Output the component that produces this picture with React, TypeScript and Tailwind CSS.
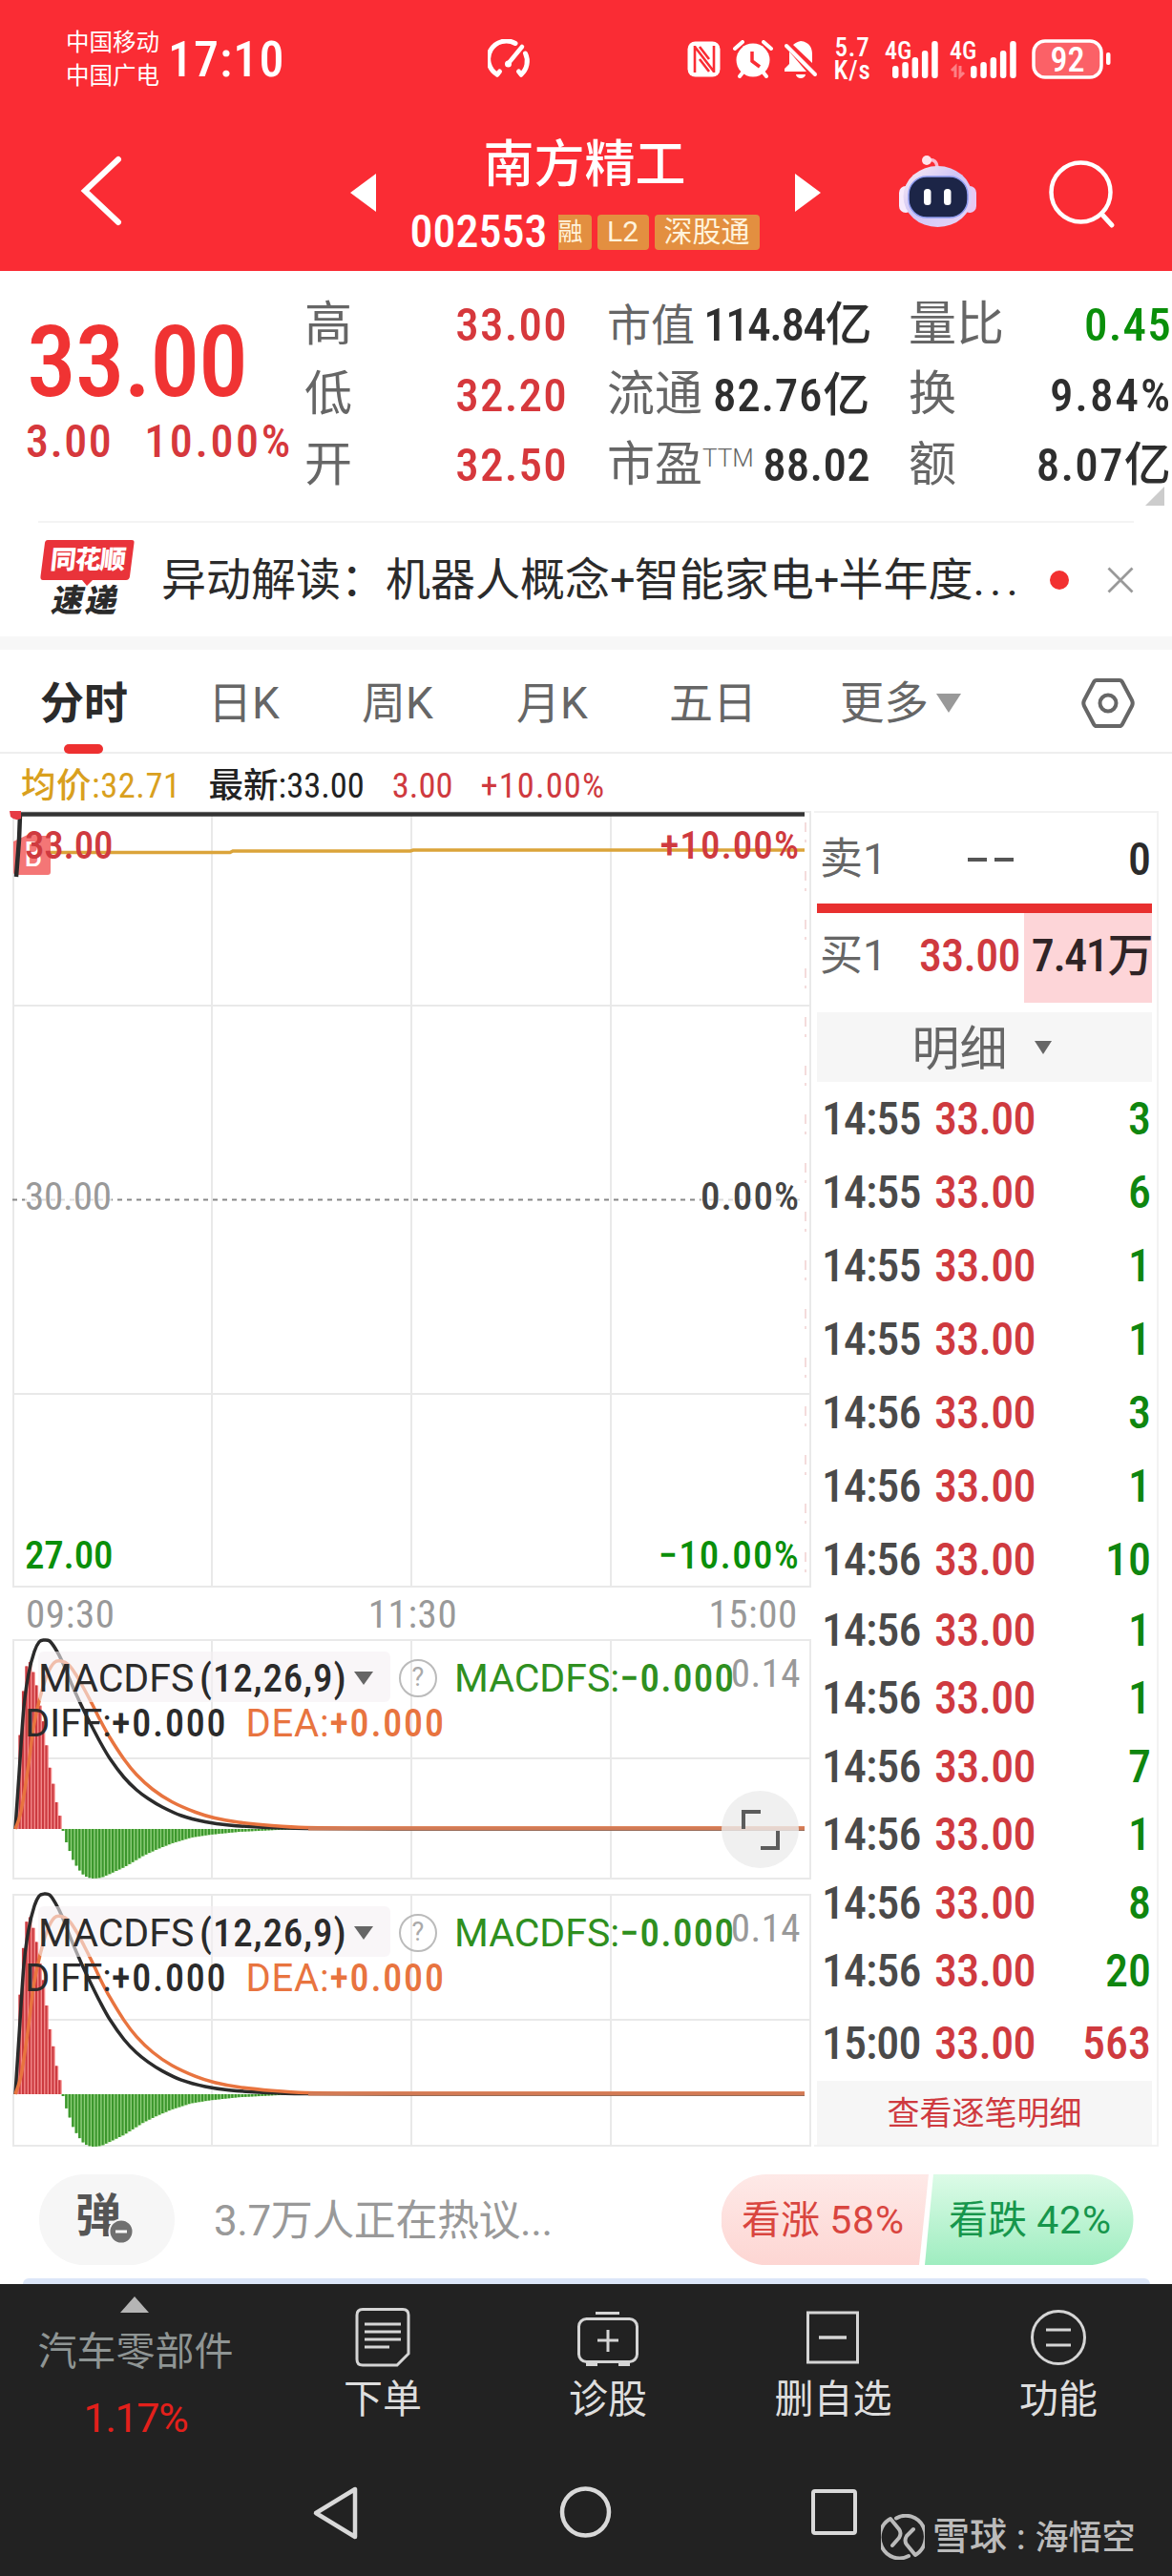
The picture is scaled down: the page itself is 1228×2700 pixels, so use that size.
import type { ReactNode } from 'react'

type TickType = { time: string; price: string; volume: string; row: string }

const NUM = "font-['Roboto_Condensed','Noto_Sans_CJK_SC',sans-serif]"

const TALL = 'h-[77px]'
const SHORT = 'h-[71.5px]'

const TICKS: TickType[] = [
  { time: '14:55', price: '33.00', volume: '3', row: TALL },
  { time: '14:55', price: '33.00', volume: '6', row: TALL },
  { time: '14:55', price: '33.00', volume: '1', row: TALL },
  { time: '14:55', price: '33.00', volume: '1', row: TALL },
  { time: '14:56', price: '33.00', volume: '3', row: TALL },
  { time: '14:56', price: '33.00', volume: '1', row: TALL },
  { time: '14:56', price: '33.00', volume: '10', row: TALL },
  { time: '14:56', price: '33.00', volume: '1', row: SHORT },
  { time: '14:56', price: '33.00', volume: '1', row: SHORT },
  { time: '14:56', price: '33.00', volume: '7', row: SHORT },
  { time: '14:56', price: '33.00', volume: '1', row: SHORT },
  { time: '14:56', price: '33.00', volume: '8', row: SHORT },
  { time: '14:56', price: '33.00', volume: '20', row: SHORT },
  { time: '15:00', price: '33.00', volume: '563', row: 'h-[79px]' },
]

type PointType = [number, number]

// x in pixels from the left of the panel, y as height above the zero line
const DIFF: PointType[] = [
  [3, 0], [7, 58], [12, 128], [17, 163], [23, 186], [28, 196], [33, 198],
  [39, 197], [45, 189], [52, 176], [62, 152], [72, 130], [82, 110], [92, 91],
  [102, 74], [117, 54], [130, 41], [142, 32], [157, 23], [177, 14], [202, 7.5],
  [227, 4], [267, 1.5], [307, 0.5], [400, 0], [830, 0],
]
const DEA: PointType[] = [
  [3, 0], [9, 18], [17, 68], [22, 106], [29, 138], [37, 163], [44, 174.5],
  [51, 176], [59, 172], [67, 161], [75, 147], [84, 130], [92, 114], [102, 96],
  [117, 73], [130, 57], [147, 41.5], [167, 28.5], [192, 17.5], [212, 11.5],
  [237, 7], [272, 3.5], [307, 1.5], [400, 1], [830, 1],
]
const HIST: PointType[] = [
  [4, 20], [7, 92], [11, 145], [14, 170], [18, 175], [21, 166], [25, 150],
  [28, 131], [32, 112], [35, 90], [38, 68], [42, 49], [45, 31], [49, 15],
  [52, 1], [55, -11], [59, -21], [62, -30], [65, -36], [69, -42], [72, -46],
  [75, -49], [79, -51], [85, -52], [93, -51], [102, -47], [117, -40],
  [137, -28], [152, -21], [167, -15], [187, -9], [207, -6], [237, -3],
  [277, -1], [320, 0],
]

const histAt = (x: number) => {
  const i = HIST.findIndex(([px]) => px >= x)
  if (i <= 0) return i === 0 ? HIST[0][1] : 0
  const [x0, y0] = HIST[i - 1]
  const [x1, y1] = HIST[i]
  return y0 + ((y1 - y0) * (x - x0)) / (x1 - x0)
}

const BARS = Array.from({ length: 88 }, (_, i) => 4 + i * 3.48)

const smoothPath = (points: PointType[], zero: number, scale: number) => {
  const p = points.map(([x, y]) => [x, zero - y * scale])
  let d = `M${p[0][0]},${p[0][1]}`
  for (let i = 0; i < p.length - 1; i++) {
    const a = p[Math.max(i - 1, 0)]
    const b = p[i]
    const c = p[i + 1]
    const e = p[Math.min(i + 2, p.length - 1)]
    // limit the handles so uneven spacing doesn't overshoot
    const k = (c[0] - b[0]) / 3
    const s1 = (c[1] - a[1]) / (c[0] - a[0] || 1)
    const s2 = (e[1] - b[1]) / (e[0] - b[0] || 1)
    d += `C${b[0] + k},${b[1] + s1 * k} ${c[0] - k},${c[1] - s2 * k} ${c[0]},${c[1]}`
  }
  return d
}

const StatusBar = () => (
  <div className="flex h-[124px] items-center text-white">
    <div className="ml-[69px] flex w-[102px] flex-col text-[24.5px] leading-[35px]">
      <span>中国移动</span>
      <span>中国广电</span>
    </div>
    <span className={`ml-[5px] w-[127px] pt-0.5 text-[52px] font-medium leading-none tracking-[0.02em] ${NUM}`}>17:10</span>
    <svg className="ml-[208px]" width="45" height="42" viewBox="0 0 45 42" fill="none" stroke="white" strokeWidth="5" strokeLinecap="round">
      <path d="M10 37 A18.5 18.5 0 0 1 29 4.5" />
      <path d="M39.5 15 A18.5 18.5 0 0 1 35 37" />
      <path d="M10 37 L12.500 34" />
      <path d="M35 37 L32.500 34" />
      <path d="M36 8 L22 25" strokeWidth="4.500" />
      <circle cx="21.500" cy="26" r="3.500" fill="white" stroke="none" />
    </svg>
    <svg className="ml-[164px]" width="36" height="40" viewBox="0 0 36 40">
      <rect x="0.500" y="1.500" width="34" height="37" rx="8" fill="white" />
      <path d="M8 6 V34 M28 6 V34 M8 7 L28 33 M13 20 L23 33 M13 7 L23 20" stroke="#fa2c34" strokeWidth="2.600" fill="none" />
    </svg>
    <svg className="ml-3" width="42" height="40" viewBox="0 0 42 40">
      <circle cx="21" cy="21" r="17.500" fill="white" />
      <path d="M2 9 L10 2 M40 9 L32 2 M7 38 L11 33 M35 38 L31 33" stroke="white" strokeWidth="4" strokeLinecap="round" />
      <path d="M20 12 V22 L28 28" stroke="#fa2c34" strokeWidth="3.500" fill="none" />
    </svg>
    <svg className="ml-2.5" width="38" height="40" viewBox="0 0 38 40">
      <path d="M19 1 C28 2 31 8 31 15 V24 L11 5 C13 3 15 2 19 1Z" fill="white" />
      <path d="M7 12 L25 33 H2 V30 L7 25Z" fill="white" />
      <path d="M4 6 L34 36" stroke="white" strokeWidth="4" strokeLinecap="round" />
      <path d="M14 36 H24 A5 4 0 0 1 14 36Z" fill="white" />
    </svg>
    <div className={`ml-[14px] flex w-[42px] flex-col items-center text-[27px] font-medium leading-[24px] tracking-[0.03em] ${NUM}`}>
      <span>5.7</span>
      <span>K/s</span>
    </div>
    <Signal />
    <Signal arrows />
    <svg className="ml-3.5" width="84" height="44" viewBox="0 0 84 44">
      <rect x="2" y="3" width="71" height="38" rx="12" fill="white" fillOpacity="0.25" stroke="white" strokeWidth="3.500" />
      <rect x="78" y="15" width="4.500" height="13" rx="2" fill="white" />
      <text x="37.500" y="34.500" textAnchor="middle" fontSize="36" fontWeight="500" fill="white" className={NUM}>92</text>
    </svg>
  </div>
)

const Signal = ({ arrows = false }: { arrows?: boolean }) => (
  <svg className={arrows ? 'ml-2.5 overflow-visible' : 'ml-[13px] overflow-visible'} width={arrows ? 72 : 58} height="44" viewBox={arrows ? '0 0 72 44' : '0 0 58 44'}>
    <text x="0" y="22" fontSize="26" fontWeight="500" fill="white" className={NUM}>4G</text>
    {arrows && <path d="M6 41 V30 L2 34 M11 29 V40 L15 36" stroke="white" strokeOpacity="0.4" strokeWidth="3" fill="none" />}
    <g fill="white" transform={arrows ? 'translate(22 1)' : 'translate(8 1)'}>
      <rect x="0" y="28" width="6.500" height="13" rx="3" />
      <rect x="10.300" y="24" width="6.500" height="17" rx="3" />
      <rect x="20.600" y="19" width="6.500" height="22" rx="3" />
      <rect x="30.900" y="12" width="6.500" height="29" rx="3" />
      <rect x="41.200" y="2" width="6.500" height="39" rx="3" />
    </g>
  </svg>
)

const TitleBar = () => (
  <div className="flex h-40 text-white">
    <svg className="ml-[84px] mt-[38px]" width="46" height="76" viewBox="0 0 46 76" fill="none" stroke="white" strokeWidth="6" strokeLinecap="round">
      <path d="M40 5 L5 38 L40 71" strokeLinejoin="miter" />
    </svg>
    <svg className="ml-[237px] mt-[58px]" width="27" height="40" viewBox="0 0 27 40">
      <path d="M27 0 V40 L0 20Z" fill="white" />
    </svg>
    <div className="ml-[34px] mt-[19px] flex w-[369px] flex-col items-center">
      <span className="text-[53px] font-medium leading-[60px]">南方精工</span>
      <div className="mt-[21px] flex h-[38px] items-center text-[28px] leading-none text-[#fff3dc]">
        <span className={`mr-[12px] w-[143px] text-[48px] font-medium text-white ${NUM}`}>002553</span>
        <span className="flex h-[37px] w-[35px] items-center justify-start overflow-hidden rounded-r-sm bg-[#e38f40] text-[26px]">融</span>
        <span className="ml-1.5 flex h-[37px] w-[54px] items-center justify-center rounded-sm bg-[#e38f40] text-[30px]">L2</span>
        <span className="ml-1.5 flex h-[37px] w-[110px] items-center justify-center rounded-sm bg-[#e38f40] text-[30px]">深股通</span>
      </div>
    </div>
    <svg className="ml-9 mt-[58px]" width="27" height="40" viewBox="0 0 27 40">
      <path d="M0 0 V40 L27 20Z" fill="white" />
    </svg>
    <svg className="ml-[81px] mt-[37px]" width="83" height="78" viewBox="0 0 83 78">
      <defs>
        <linearGradient id="shell" x1="0" y1="0" x2="1" y2="1">
          <stop offset="0" stopColor="#ffeef2" />
          <stop offset="0.450" stopColor="#cfc6f6" />
          <stop offset="1" stopColor="#e9d6f8" />
        </linearGradient>
      </defs>
      <path d="M30 7 C38 5 41 9 41 16" stroke="#fbb9cf" strokeWidth="3.500" fill="none" />
      <circle cx="30" cy="7" r="5" fill="#ffe3ec" />
      <rect x="1" y="34" width="14" height="28" rx="7" fill="#f6eafc" />
      <rect x="68" y="34" width="14" height="28" rx="7" fill="#e6c9f3" />
      <ellipse cx="41.500" cy="45" rx="36" ry="32" fill="url(#shell)" />
      <rect x="11" y="24" width="62" height="43" rx="19" fill="#1c2547" stroke="#8f9cf0" strokeWidth="1.500" />
      <rect x="27" y="37" width="7.500" height="17" rx="3.500" fill="white" />
      <rect x="48" y="37" width="7.500" height="17" rx="3.500" fill="white" />
    </svg>
    <svg className="ml-[74px] mt-[43px]" width="72" height="74" viewBox="0 0 72 74" fill="none" stroke="white" strokeWidth="4.500" strokeLinecap="round">
      <circle cx="34.500" cy="34.500" r="31" />
      <path d="M56 57 L67 69" strokeWidth="5" />
    </svg>
  </div>
)

const QuoteRow = ({
  label,
  children,
  color = 'text-[#2e2e2e]',
  tracking = 'tracking-[0.025em]',
}: {
  label: ReactNode
  children: ReactNode
  color?: string
  tracking?: string
}) => (
  <div className="flex h-[73.500px] items-center justify-between whitespace-nowrap text-[49px] leading-none">
    <span className="text-[50px] text-[#666]">{label}</span>
    <span className={`pt-0.5 font-medium ${NUM} ${tracking} ${color}`}>{children}</span>
  </div>
)

const Quote = () => (
  <div className="relative ml-[25px] flex h-[262px] pt-[19px]">
    <div className={`w-[294px] text-[#f03333] ${NUM}`}>
      <div className="ml-[3px] mt-[19px] text-[104px] font-medium leading-[116px] tracking-[-0.012em]">33.00</div>
      <div className="-mt-[3px] ml-[2px] flex gap-[33px] whitespace-nowrap text-[48px] font-medium leading-[56px] text-[#d6383c]">
        <span className="tracking-[0.03em]">3.00</span>
        <span className="tracking-[0.055em]">10.00%</span>
      </div>
    </div>
    <div className="w-[276px]">
      <QuoteRow label="高" color="text-[#d6383c]">33.00</QuoteRow>
      <QuoteRow label="低" color="text-[#d6383c]">32.20</QuoteRow>
      <QuoteRow label="开" color="text-[#d6383c]">32.50</QuoteRow>
    </div>
    <div className="ml-[41px] w-[276px]">
      <QuoteRow label={<span className="text-[46px]">市值</span>} tracking="tracking-[-0.03em]">114.84亿</QuoteRow>
      <QuoteRow label="流通" tracking="tracking-[0.015em]">82.76亿</QuoteRow>
      <QuoteRow label={<>市盈<sup className="relative -top-[15px] align-baseline text-[26px] font-light">TTM</sup></>} tracking="tracking-[0.005em]">88.02</QuoteRow>
    </div>
    <div className="ml-[40px] w-[276px]">
      <QuoteRow label="量比" color="text-[#0a8f0a]">0.45</QuoteRow>
      <QuoteRow label="换" tracking="tracking-[0.04em]">9.84%</QuoteRow>
      <QuoteRow label="额">8.07亿</QuoteRow>
    </div>
    <svg className="absolute bottom-4 right-2" width="20" height="20" viewBox="0 0 20 20">
      <path d="M20 0 V20 H0Z" fill="#ccc" />
    </svg>
  </div>
)

const News = () => (
  <div className="mx-10 flex h-[122px] items-center border-t-2 border-[#f3f3f3]">
    <div className="relative flex h-[84px] w-[102px] flex-col items-center">
      <svg className="absolute left-0.5 top-0" width="100" height="50" viewBox="0 0 100 50">
        <path d="M8 0 H96 Q99 0 98.500 3 L94 38 Q93.500 42 90 42 H55 L49 48 L44 42 H3 Q0 42 0.500 38 L5 3 Q5.500 0 8 0Z" fill="#e9333a" />
      </svg>
      <span className="relative ml-0.5 mt-2 -skew-x-6 text-[27px] font-black leading-[27px] tracking-[-0.04em] text-white">同花顺</span>
      <span className="mt-3 -skew-x-12 text-[33px] font-black leading-[34px] tracking-[0.08em] text-[#2b2b2b]">速递</span>
    </div>
    <span className="ml-[27px] w-[897px] whitespace-nowrap text-[47px] leading-none text-[#2b2b2b]">
      异动解读：机器人概念<span className="tracking-[-0.02em]">+</span>智能家电<span className="tracking-[-0.02em]">+</span>半年度<span className="tracking-[0.11em]">...</span>
    </span>
    <span className="ml-[34px] size-5 rounded-full bg-[#f23030]" />
    <svg className="ml-10" width="28" height="28" viewBox="0 0 28 28" stroke="#999" strokeWidth="2.800">
      <path d="M1.500 1.500 L26.500 26.500 M26.500 1.500 L1.500 26.500" />
    </svg>
  </div>
)

const Tabs = () => (
  <div className="flex h-[109px] items-center border-b-2 border-[#eee] pt-1 text-[46px] leading-none text-[#666]">
    <div className="relative ml-[42px] w-[93px] whitespace-nowrap font-bold text-[#2b2b2b]">
      分时
      <span className="absolute -bottom-[30px] left-[25px] h-2.5 w-[41px] rounded-full bg-[#ee3030]" />
    </div>
    <span className="ml-[83px] w-[78px]">日K</span>
    <span className="ml-[83px] w-[78px]">周K</span>
    <span className="ml-[84px] w-[78px]">月K</span>
    <span className="ml-[82px] w-[92px]">五日</span>
    <span className="ml-[87px] w-[94px] text-[46.500px]">更多</span>
    <svg className="ml-[7px]" width="26" height="20" viewBox="0 0 26 20">
      <path d="M0 0 H26 L13 20Z" fill="#999" />
    </svg>
    <svg className="ml-[125px]" width="58" height="54" viewBox="0 0 58 54" fill="none" stroke="#666" strokeWidth="4">
      <path d="M17 3 H41 Q43 3 44 5 L54 24 Q55.500 27 54 30 L44 49 Q43 51 41 51 H17 Q15 51 14 49 L4 30 Q2.500 27 4 24 L14 5 Q15 3 17 3Z" />
      <circle cx="29" cy="27" r="8.500" />
    </svg>
  </div>
)

const Grid = ({ height, rows }: { height: number; rows: number[] }) => (
  <g stroke="#e9e9e9" strokeWidth="2" fill="none">
    <rect x="1" y="1" width="835" height={height - 2} />
    <path d={`M209 0 V${height} M418 0 V${height} M627 0 V${height}`} />
    {rows.map((y) => (
      <path key={y} d={`M0 ${y} H836`} />
    ))}
  </g>
)

const PriceChart = () => (
  <div className="relative h-[814px]">
    <svg className="absolute left-0 top-0 overflow-visible" width="837" height="814" viewBox="0 0 837 814">
      <Grid height={814} rows={[204, 611]} />
      <path d="M0 407.500 H830" stroke="#888" strokeWidth="2" strokeDasharray="5 5" />
      <path d="M831 12 V800" stroke="#e9b9b9" strokeWidth="1" strokeDasharray="10 8 3 30" />
      <path d="M37 43.500 H228 L231 42 H417 L420 41 H830" stroke="#dba43a" strokeWidth="3.500" fill="none" />
      <path d="M1 32 L18 24 L27 26 H36 Q40 26 40 30 V64 Q40 67 37 67 H4 Q1 67 1 64Z" fill="#f04848" fillOpacity="0.750" />
      <text x="12" y="58" fontSize="36" fill="white" className={NUM}>B</text>
      <path d="M8 4 L7 30 L4 69" stroke="#2b2b2b" strokeWidth="4.500" fill="none" />
      <path d="M7 3.500 H830" stroke="#333" strokeWidth="4.500" />
      <path d="M-3 0 H9 V8 Q3 11 -2 6Z" fill="#e63a44" />
    </svg>
    <div className={`relative flex h-full flex-col justify-between pb-[14px] pl-[13px] pr-[15px] pt-[16px] text-[41px] font-medium leading-[40px] tracking-[-0.005em] ${NUM}`}>
      <div className="flex justify-between text-[#cf3a3f]">
        <span>33.00</span>
        <span className="tracking-[0.025em]">+10.00%</span>
      </div>
      <div className="flex justify-between pb-[8px]">
        <span className="bg-white/70 font-[450] text-[#999]">30.00</span>
        <span className="bg-white/70 tracking-[0.025em] text-[#444]">0.00%</span>
      </div>
      <div className="flex justify-between text-[#0a8f0a]">
        <span>27.00</span>
        <span className="tracking-[0.03em]">−10.00%</span>
      </div>
    </div>
  </div>
)

const MacdPanel = ({ height, mid, zero, scale, expand = false }: { height: number; mid: number; zero: number; scale: number; expand?: boolean }) => (
  <div className="relative" style={{ height }}>
    <svg className="absolute left-0 top-0 overflow-visible" width="837" height={height} viewBox={`0 0 837 ${height}`}>
      <Grid height={height} rows={[mid]} />
      {BARS.map((x) => {
        const v = histAt(x) * scale
        return (
          <g key={x}>
            <rect x={x - 1} y={v > 0 ? zero - v : zero} width="3.480" height={Math.abs(v)} fill={v > 0 ? '#f58a8a' : '#8fd07a'} />
            <rect x={x - 1} y={v > 0 ? zero - v : zero} width="2.200" height={Math.max(Math.abs(v), 0.5)} fill={v > 0 ? '#cc3a40' : '#3b962c'} />
          </g>
        )
      })}
      <path d={smoothPath(DIFF, zero, scale)} stroke="#2b2b2b" strokeWidth="3.500" fill="none" />
      <path d={smoothPath(DEA, zero, scale)} stroke="#e8743f" strokeWidth="3.500" fill="none" />
      <path d={`M310 ${zero - 0.5} H830`} stroke="#d27a55" strokeWidth="4" />
    </svg>
    <div className="relative flex h-full flex-col pt-[13px]">
      <div className="flex h-[53px] items-center whitespace-nowrap text-[41px] leading-none">
        <div className="ml-[27px] flex h-full w-[369px] items-center rounded-md bg-[#f5f0f3]/60 pt-[3px] text-[#2b2b2b]">
          <span className="w-[169px]">MACDFS</span>
          <span className={`w-[150px] text-[41px] font-medium tracking-[0.02em] ${NUM}`}>(12,26,9)</span>
          <svg className="ml-[12px]" width="20" height="14" viewBox="0 0 20 14">
            <path d="M0 0 H20 L10 14Z" fill="#666" />
          </svg>
        </div>
        <span className="ml-[9px] mt-0.5 flex size-10 items-center justify-center rounded-full border-[2.500px] border-[#bbb] text-[27px] text-[#aaa]">?</span>
        <span className="ml-[18px] pt-[3px] text-[#2f8f20]">
          MACDFS:<span className={`font-medium tracking-[0.03em] ${NUM}`}>−0.000</span>
        </span>
      </div>
      <div className="ml-[13px] mt-[3px] flex gap-[19px] text-[40px] leading-[40px]">
        <span className="text-[#2b2b2b]">
          DIFF:<span className={`font-medium tracking-[0.045em] ${NUM}`}>+0.000</span>
        </span>
        <span className="tracking-[0.02em] text-[#e8743f]">
          DEA:<span className={`font-medium tracking-[0.045em] ${NUM}`}>+0.000</span>
        </span>
      </div>
    </div>
    <span className={`absolute right-[14px] top-[16px] text-[41px] leading-[40px] tracking-[0.01em] text-[#999] ${NUM}`}>0.14</span>
    {expand && (
      <div className="absolute bottom-3 right-[16px] flex size-[81px] items-center justify-center rounded-full bg-[#ececec]/80">
        <svg width="42" height="44" viewBox="0 0 42 44" fill="none" stroke="#5c5c5c" strokeWidth="4">
          <path d="M3 21 V3 H21 M39 23 V41 H21" />
        </svg>
      </div>
    )}
  </div>
)

const OrderBook = () => (
  <div className={`flex h-[1400px] w-[361px] flex-col border-2 border-l-0 border-[#f2f2f2] pl-[3px] pr-[5px] text-[48px] leading-none ${NUM}`}>
    <div className="flex h-[95px] items-center justify-between pl-[3px] pr-px pt-0.5">
      <span className="font-[Roboto,'Noto_Sans_CJK_SC',sans-serif] text-[45px] text-[#666]">卖1</span>
      <span className="flex gap-2 pl-[51px]">
        <i className="h-1 w-5 bg-[#555]" />
        <i className="h-1 w-5 bg-[#555]" />
      </span>
      <span className="ml-[86px] font-medium text-[#2b2b2b]">0</span>
    </div>
    <div className="h-2.5 bg-[#e8302f]" />
    <div className="flex h-[94px]">
      <span className="ml-[3px] mt-[22px] w-[104px] font-[Roboto,'Noto_Sans_CJK_SC',sans-serif] text-[45px] text-[#666]">买1</span>
      <span className="mt-[21px] w-[110px] font-medium tracking-[-0.015em] text-[#cf3a3f]">33.00</span>
      <span className="flex flex-1 justify-end bg-[#fdd5d8] pt-[21px] font-medium tracking-[-0.03em] text-[#2f2426]">7.41万</span>
    </div>
    <div className="mt-2.5 flex h-[73px] shrink-0 items-center justify-center gap-7 bg-[#f6f6f6] pr-1.5 pt-1 text-[50px] text-[#666]">
      <span>明细</span>
      <svg className="-mt-1" width="18" height="14" viewBox="0 0 18 14">
        <path d="M0 0 H18 L9 14Z" fill="#666" />
      </svg>
    </div>
    {TICKS.map((tick, index) => (
      <div key={index} className={`flex shrink-0 items-center pl-[5px] pr-px font-medium ${tick.row}`}>
        <span className="w-[118px] tracking-[-0.02em] text-[#4a4a4a]">{tick.time}</span>
        <span className="tracking-[-0.015em] text-[#cf3a3f]">{tick.price}</span>
        <span className={`flex-1 text-right ${tick.time === '15:00' ? 'text-[#cf3a3f]' : 'text-[#0f860f]'}`}>{tick.volume}</span>
      </div>
    ))}
    <div className="flex h-[67px] shrink-0 items-center justify-center bg-[#f6f6f6] text-[34px] text-[#cf3a3f]">查看逐笔明细</div>
  </div>
)

const Sentiment = () => (
  <div className="relative flex h-[144px] items-center">
    <div className="relative ml-[41px] mt-[9px] flex h-[95px] w-[142px] items-center rounded-full bg-[#f6f6f6] pb-2 pl-[38px]">
      <span className="text-[48px] font-bold leading-none text-[#555]">弹</span>
      <svg className="absolute left-[72px] top-[46px]" width="28" height="28" viewBox="0 0 28 28">
        <circle cx="14" cy="14" r="12.500" fill="#707070" stroke="#f6f6f6" strokeWidth="2" />
        <path d="M8 14 H20" stroke="white" strokeWidth="3" />
      </svg>
    </div>
    <span className="ml-[41px] mt-3 w-[532px] text-[44px] leading-none tracking-[-0.01em] text-[#999]">3.7万人正在热议...</span>
    <div className="relative mt-2 flex h-[95px] w-[432px] items-center text-[41px] leading-none">
      <svg className="absolute inset-0" width="432" height="95" viewBox="0 0 432 95">
        <defs>
          <linearGradient id="up" x1="0" y1="0" x2="0" y2="1">
            <stop offset="0" stopColor="#fee9e7" />
            <stop offset="1" stopColor="#fdd6d3" />
          </linearGradient>
          <linearGradient id="down" x1="0" y1="0" x2="0" y2="1">
            <stop offset="0" stopColor="#dcfbe7" />
            <stop offset="1" stopColor="#9fedc0" />
          </linearGradient>
        </defs>
        <path d="M47 0 H217 L207 95 H47 A47.500 47.500 0 0 1 47 0Z" fill="url(#up)" />
        <path d="M222 0 H384 A47.500 47.500 0 0 1 384 95 H213Z" fill="url(#down)" />
      </svg>
      <span className="relative ml-[21px] w-[217px] pt-0.5 text-[#d9453f]">看涨 <span className="tracking-[0.02em]">58%</span></span>
      <span className="relative pt-0.5 text-[#17964c]">看跌 <span className="tracking-[0.02em]">42%</span></span>
    </div>
    <div className="absolute bottom-0 left-6 h-1.5 w-[1181px] rounded-t-lg bg-[#dce6f8]" />
  </div>
)

const ToolItem = ({ label, children }: { label: string; children: ReactNode }) => (
  <div className="flex w-[236px] flex-col items-center pt-6">
    <svg width="66" height="64" viewBox="0 0 66 64" fill="none" stroke="#d5d5d5" strokeWidth="3">
      {children}
    </svg>
    <span className="mt-[11px] text-[41px] leading-[44px] text-[#dedede]">{label}</span>
  </div>
)

const Toolbar = () => (
  <div className="flex h-[170px]">
    <div className="ml-[25px] flex w-[234px] flex-col items-center pt-[13px]">
      <svg className="-ml-0.5" width="30" height="17" viewBox="0 0 30 17">
        <path d="M15 0 L30 17 H0Z" fill="#b5b5b5" />
      </svg>
      <span className="mt-[19px] text-[41px] leading-[44px] text-[#8f9594]">汽车零部件</span>
      <span className="mt-[25px] text-[43px] leading-[44px] tracking-[-0.03em] text-[#e3201b]">1.17%</span>
    </div>
    <div className="ml-6 flex">
      <ToolItem label="下单">
        <path d="M12 2.500 H54 Q60 2.500 60 8.500 V49 L48 61 H12 Q6 61 6 55 V8.500 Q6 2.500 12 2.500Z" />
        <path d="M14 18 H52 M14 26 H52 M14 34 H52 M14 42 H40" />
      </ToolItem>
      <ToolItem label="诊股">
        <rect x="2.500" y="12.500" width="61" height="45" rx="8" />
        <path d="M20 6.500 H45 M33 24 V47 M22 35 H44" />
        <path d="M10 60 H22 M44 60 H56" strokeWidth="4" />
      </ToolItem>
      <ToolItem label="删自选">
        <rect x="6.500" y="6" width="52" height="52" />
        <path d="M18 32 H47" strokeWidth="3.500" />
      </ToolItem>
      <ToolItem label="功能">
        <circle cx="33" cy="32" r="27.500" />
        <path d="M20 24 H46 M20 40 H46" />
      </ToolItem>
    </div>
  </div>
)

const NavBar = () => (
  <div className="relative flex h-[136px] items-start pt-[37px]">
    <svg className="ml-[327px] mt-1" width="50" height="58" viewBox="0 0 50 58" fill="none" stroke="#d9d9d9" strokeWidth="4.500" strokeLinejoin="round">
      <path d="M45 4 V54 L4 29Z" />
    </svg>
    <svg className="ml-[208px] mt-1" width="56" height="58" viewBox="0 0 56 58" fill="none" stroke="#d9d9d9" strokeWidth="4.500">
      <circle cx="28.500" cy="28" r="24.500" />
    </svg>
    <div className="ml-[209px] mt-[8px] size-12 rounded border-[4.500px] border-[#d9d9d9]" />
    <div className="absolute left-[923px] top-[71px] flex items-center gap-2 whitespace-nowrap text-[36px] font-medium leading-none text-[#bbb]">
      <svg width="46" height="48" viewBox="0 0 46 48" fill="none" stroke="#bbb" strokeWidth="4" strokeLinecap="round" strokeLinejoin="round">
        <path d="M16 4.500 A20 21 0 0 1 36 43 L27 32 Q24 28 27 23 L34 16" />
        <path d="M29 44 A20 21 0 0 1 10 5 L19 16 Q22 20 19 25 L12 33" />
      </svg>
      <span>
        <span className="text-[39px]">雪球</span>
        <span className="ml-[10px] mr-[10px] inline-block">:</span>
        <span className="text-[35px]">海悟空</span>
      </span>
    </div>
  </div>
)

const App = () => {
  return (
    <div className="flex h-[2700px] w-[1228px] flex-col overflow-hidden bg-white font-[Roboto,'Noto_Sans_CJK_SC',sans-serif]">
      <header className="bg-[#fa2c34]">
        <StatusBar />
        <TitleBar />
      </header>
      <Quote />
      <News />
      <div className="h-3.5 bg-[#f7f7f7]" />
      <Tabs />
      <div className={`flex h-[60px] items-center gap-[29px] pl-[22px] pt-[7px] text-[36.500px] font-[450] leading-none text-[#cf3a3f] ${NUM}`}>
        <span className="tracking-[0.015em] text-[#d9a01e]">均价:32.71</span>
        <span className="text-[#222]">最新:33.00</span>
        <span>3.00</span>
        <span className="tracking-[0.03em]">+10.00%</span>
      </div>
      <div className="flex h-[1400px]">
        <div className="ml-[13px] w-[840px]">
          <PriceChart />
          <div className={`flex h-[54px] items-center justify-between pl-[14px] pr-[17px] pt-[3px] text-[41px] leading-none tracking-[0.015em] text-[#999] ${NUM}`}>
            <span>09:30</span>
            <span className="pl-0.5">11:30</span>
            <span>15:00</span>
          </div>
          <MacdPanel height={252} mid={125} zero={199} scale={1} expand />
          <div className="h-[15px]" />
          <MacdPanel height={265} mid={132} zero={210} scale={1.06} />
        </div>
        <OrderBook />
      </div>
      <Sentiment />
      <footer className="h-[306px] bg-[#222]">
        <Toolbar />
        <NavBar />
      </footer>
    </div>
  )
}

export default App
